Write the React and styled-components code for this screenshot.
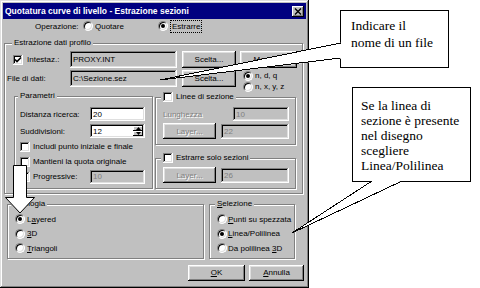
import React from "react";
import styled, { createGlobalStyle } from "styled-components";

const GlobalStyle = createGlobalStyle`
  html, body {
    margin: 0;
    padding: 0;
    background: #ffffff;
  }
  body {
    font-family: "Liberation Sans", Arial, sans-serif;
    overflow: hidden;
  }
`;

const Page = styled.div`
  position: relative;
  width: 480px;
  height: 288px;
  overflow: hidden;
`;

const Window = styled.div`
  width: 309px;
  height: 288px;
  box-sizing: border-box;
  padding: 3px;
  background: #c0c0c0;
  box-shadow: inset -1px -1px #000, inset 1px 1px #dfdfdf,
    inset -2px -2px #808080, inset 2px 2px #fff;
  display: flex;
  flex-direction: column;
  font-size: 8px;
  color: #000;
`;

const TitleBar = styled.div`
  height: 16px;
  flex: none;
  display: flex;
  align-items: center;
  justify-content: space-between;
  padding: 0 2px 0 2px;
  background: #000080;
  color: #fff;
  font-weight: 700;
  font-size: 8.5px;
`;

const CloseBtn = styled.div`
  width: 12px;
  height: 11px;
  display: flex;
  align-items: center;
  justify-content: center;
  background: #c0c0c0;
  box-shadow: inset -1px -1px #000, inset 1px 1px #fff, inset -2px -2px #808080;
`;

const Body = styled.div`
  flex: 1;
  display: flex;
  flex-direction: column;
  padding-left: 1px;
`;

const OpRow = styled.div`
  height: 14px;
  display: flex;
  align-items: center;
  padding-left: 31px;
`;

const OpLabel = styled.span`
  width: 48px;
`;

const Option = styled.div`
  display: flex;
  align-items: center;
  gap: ${(p) => (p.$gap != null ? p.$gap : 2)}px;
  width: ${(p) => (p.$w ? `${p.$w}px` : "auto")};
  height: ${(p) => (p.$h ? `${p.$h}px` : "auto")};
  white-space: nowrap;
`;

const Radio = styled.span`
  position: relative;
  flex: none;
  width: 10px;
  height: 10px;
  box-sizing: border-box;
  border-radius: 50%;
  background: #fff;
  border: 1px solid;
  border-color: #808080 #fff #fff #808080;
  box-shadow: inset 1px 1px 0 #000, inset -1px -1px 0 #dfdfdf;

  &::after {
    content: "";
    display: ${(p) => (p.$on ? "block" : "none")};
    position: absolute;
    left: 2px;
    top: 2px;
    width: 4px;
    height: 4px;
    border-radius: 50%;
    background: #000;
  }
`;

const Focus = styled.span`
  border: 1px dotted #000;
  padding: 0 1px;
  line-height: 11px;
`;

const CheckBox = styled.span`
  flex: none;
  width: 10px;
  height: 10px;
  box-sizing: border-box;
  display: inline-flex;
  align-items: center;
  justify-content: center;
  background: #fff;
  box-shadow: inset -1px -1px #fff, inset 1px 1px #808080,
    inset -2px -2px #dfdfdf, inset 2px 2px #000;
`;

const Frame = styled.fieldset`
  margin: ${(p) => p.$mt || 0}px 0 0 ${(p) => p.$ml || 0}px;
  padding: 0;
  min-width: 0;
  width: ${(p) => p.$w}px;
  box-sizing: border-box;
  border: 1px solid #808080;
  box-shadow: 1px 1px 0 #fff, inset 1px 1px 0 #fff;
`;

const Legend = styled.legend`
  margin-left: ${(p) => p.$ml}px;
  padding: 0 2px;
  height: 10px;
  line-height: 10px;
  background: #c0c0c0;
  white-space: nowrap;
`;

const LegendInner = styled.span`
  display: flex;
  align-items: center;
  gap: 3px;
`;

const FrameBody = styled.div`
  display: flex;
  flex-direction: column;
  padding: ${(p) => p.$pt || 0}px 0 ${(p) => p.$pb || 0}px ${(p) => p.$pl || 0}px;
`;

const Row = styled.div`
  display: flex;
  align-items: ${(p) => (p.$top ? "flex-start" : "center")};
  height: ${(p) => (p.$h ? `${p.$h}px` : "auto")};
  margin-top: ${(p) => p.$mt || 0}px;
  padding-left: ${(p) => p.$pl || 0}px;
`;

const Label = styled.span`
  flex: none;
  width: ${(p) => (p.$w ? `${p.$w}px` : "auto")};
  margin-left: ${(p) => p.$ml || 0}px;
  line-height: ${(p) => (p.$lh ? `${p.$lh}px` : "normal")};
  color: ${(p) => (p.$off ? "#808080" : "#000")};
  text-shadow: ${(p) => (p.$off ? "1px 1px 0 #fff" : "none")};
  white-space: nowrap;
`;

const Field = styled.div`
  flex: none;
  display: flex;
  align-items: center;
  width: ${(p) => p.$w}px;
  height: ${(p) => p.$h}px;
  margin-left: ${(p) => p.$ml || 0}px;
  box-sizing: border-box;
  padding: 2px 2px 2px 3px;
  background: ${(p) => (p.$gray || p.$off ? "#c0c0c0" : "#fff")};
  color: ${(p) => (p.$off ? "#808080" : "#000")};
  box-shadow: inset -1px -1px #fff, inset 1px 1px #808080,
    inset -2px -2px #dfdfdf, inset 2px 2px #000;
  white-space: nowrap;
`;

const FieldText = styled.span`
  flex: 1;
`;

const Spin = styled.div`
  display: flex;
  flex-direction: column;
  width: 10px;
  height: 100%;
`;

const SpinBtn = styled.div`
  flex: 1;
  display: flex;
  align-items: center;
  justify-content: center;
  background: #c0c0c0;
  box-shadow: inset -1px -1px #000, inset 1px 1px #fff;
`;

const Button = styled.div`
  flex: none;
  display: flex;
  align-items: center;
  justify-content: center;
  width: ${(p) => p.$w}px;
  height: ${(p) => p.$h}px;
  margin-left: ${(p) => p.$ml || 0}px;
  background: #c0c0c0;
  color: ${(p) => (p.$off ? "#808080" : "#000")};
  text-shadow: ${(p) => (p.$off ? "1px 1px 0 #fff" : "none")};
  box-shadow: inset -1px -1px #000, inset 1px 1px #fff,
    inset -2px -2px #808080, inset 2px 2px #dfdfdf;
  white-space: nowrap;
`;

const RadioStack = styled.div`
  display: flex;
  flex-direction: column;
  margin-left: ${(p) => p.$ml || 0}px;
`;

const Columns = styled.div`
  display: flex;
  align-items: flex-start;
  gap: 2px;
  margin-top: -1px;
  padding-left: 9px;
`;

const RightCol = styled.div`
  display: flex;
  flex-direction: column;
  gap: 8px;
  margin-top: 1px;
`;

const BottomRow = styled.div`
  display: flex;
  align-items: flex-start;
  margin-top: 5px;
`;

const ButtonRow = styled.div`
  display: flex;
  justify-content: flex-end;
  gap: 4px;
  margin-top: 6px;
  padding-right: 2px;
`;

const CalloutBox = styled.div`
  position: absolute;
  left: ${(p) => p.$x}px;
  top: ${(p) => p.$y}px;
  width: ${(p) => p.$w}px;
  height: ${(p) => p.$h}px;
  box-sizing: border-box;
  padding: ${(p) => p.$pt}px 0 0 ${(p) => p.$pl}px;
  background: #fff;
  border: 1px solid #000;
  font-family: "Liberation Serif", "Times New Roman", serif;
  font-size: 13.5px;
  line-height: ${(p) => p.$lh}px;
  color: #000;
`;

const Overlay = styled.svg`
  position: absolute;
  left: ${(p) => p.$x}px;
  top: ${(p) => p.$y}px;
  overflow: visible;
`;

const Check = ({ on }) => (
  <CheckBox>
    {on && (
      <svg width="8" height="8" viewBox="0 0 8 8">
        <path d="M1 3.5 L3 5.5 L7 1.5" fill="none" stroke="#000" strokeWidth="1.6" />
      </svg>
    )}
  </CheckBox>
);

const Pointer = ({ x, y, w, h, fill, line }) => (
  <Overlay $x={x} $y={y} width={w} height={h} viewBox={`0 0 ${w} ${h}`}>
    <polygon points={fill} fill="#fff" />
    <polyline points={line} fill="none" stroke="#000" strokeWidth="1" shapeRendering="crispEdges" />
  </Overlay>
);

export default function App() {
  return (
    <Page>
      <GlobalStyle />
      <Window>
        <TitleBar>
          <span>Quotatura curve di livello - Estrazione sezioni</span>
          <CloseBtn>
            <svg width="8" height="7" viewBox="0 0 8 7">
              <path d="M1 0.5 L7 6.5 M7 0.5 L1 6.5" stroke="#000" strokeWidth="1.4" />
            </svg>
          </CloseBtn>
        </TitleBar>
        <Body>
          <OpRow>
            <OpLabel>Operazione:</OpLabel>
            <Option $w={75}>
              <Radio />
              <span>Quotare</span>
            </Option>
            <Option>
              <Radio $on />
              <Focus>Estrarre</Focus>
            </Option>
          </OpRow>

          <Frame $w={299} $mt={5}>
            <Legend $ml={7}>Estrazione dati profilo</Legend>
            <FrameBody $pt={3} $pb={4}>
              <Row $h={17} $pl={8}>
                <Check on />
                <Label $w={43} $ml={4}>Intestaz.:</Label>
                <Field $w={107} $h={17} $gray>PROXY.INT</Field>
                <Button $w={54} $h={17} $ml={5}>Scelta...</Button>
                <Button $w={57} $h={17} $ml={4}>Modifica</Button>
              </Row>
              <Row $top $mt={2} $pl={2}>
                <Label $w={63} $lh={17}>File di dati:</Label>
                <Field $w={107} $h={17} $gray>C:\Sezione.sez</Field>
                <Button $w={54} $h={17} $ml={5}>Scelta...</Button>
                <RadioStack $ml={7}>
                  <Option $h={11}>
                    <Radio $on />
                    <span>n, d, q</span>
                  </Option>
                  <Option $h={11}>
                    <Radio />
                    <span>n, x, y, z</span>
                  </Option>
                </RadioStack>
              </Row>

              <Columns>
                <Frame $w={139}>
                  <Legend $ml={3}>Parametri</Legend>
                  <FrameBody $pt={6} $pb={4} $pl={5}>
                    <Row $h={14}>
                      <Label $w={70}>Distanza ricerca:</Label>
                      <Field $w={55} $h={14}>20</Field>
                    </Row>
                    <Row $h={14} $mt={3}>
                      <Label $w={70}>Suddivisioni:</Label>
                      <Field $w={55} $h={14}>
                        <FieldText>12</FieldText>
                        <Spin>
                          <SpinBtn>
                            <svg width="5" height="3" viewBox="0 0 5 3">
                              <path d="M0 3 L2.5 0 L5 3 Z" fill="#000" />
                            </svg>
                          </SpinBtn>
                          <SpinBtn>
                            <svg width="5" height="3" viewBox="0 0 5 3">
                              <path d="M0 0 L2.5 3 L5 0 Z" fill="#000" />
                            </svg>
                          </SpinBtn>
                        </Spin>
                      </Field>
                    </Row>
                    <Row $h={15} $mt={1}>
                      <Check />
                      <Label $ml={3}>Includi punto iniziale e finale</Label>
                    </Row>
                    <Row $h={15}>
                      <Check />
                      <Label $ml={3}>Mantieni la quota originale</Label>
                    </Row>
                    <Row $h={15}>
                      <Check />
                      <Label $w={57} $ml={3}>Progressive:</Label>
                      <Field $w={55} $h={14} $off>10</Field>
                    </Row>
                  </FrameBody>
                </Frame>

                <RightCol>
                  <Frame $w={141}>
                    <Legend $ml={5}>
                      <LegendInner>
                        <Check />
                        Linee di sezione
                      </LegendInner>
                    </Legend>
                    <FrameBody $pt={5} $pb={5} $pl={7}>
                      <Row $h={14}>
                        <Label $w={70} $off>Lunghezza</Label>
                        <Field $w={56} $h={14} $off>10</Field>
                      </Row>
                      <Row $h={16} $mt={2}>
                        <Button $w={53} $h={16} $off>Layer...</Button>
                        <Field $w={68} $h={15} $ml={5} $off>22</Field>
                      </Row>
                    </FrameBody>
                  </Frame>
                  <Frame $w={141}>
                    <Legend $ml={5}>
                      <LegendInner>
                        <Check />
                        Estrarre solo sezioni
                      </LegendInner>
                    </Legend>
                    <FrameBody $pt={4} $pb={5} $pl={7}>
                      <Row $h={16}>
                        <Button $w={53} $h={16} $off>Layer...</Button>
                        <Field $w={68} $h={15} $ml={5} $off>26</Field>
                      </Row>
                    </FrameBody>
                  </Frame>
                </RightCol>
              </Columns>
            </FrameBody>
          </Frame>

          <BottomRow>
            <Frame $w={197} $ml={3}>
              <Legend $ml={3}>Tipologia</Legend>
              <FrameBody $pt={3} $pb={2} $pl={7}>
                <Option $h={14.5}>
                  <Radio $on />
                  <span>L<u>a</u>yered</span>
                </Option>
                <Option $h={14.5}>
                  <Radio />
                  <span><u>3</u>D</span>
                </Option>
                <Option $h={14.5}>
                  <Radio />
                  <span><u>T</u>riangoli</span>
                </Option>
              </FrameBody>
            </Frame>
            <Frame $w={86} $ml={5}>
              <Legend $ml={5}><u>S</u>elezione</Legend>
              <FrameBody $pt={3} $pb={2} $pl={7}>
                <Option $h={14.5} $gap={1}>
                  <Radio />
                  <span><u>P</u>unti su spezzata</span>
                </Option>
                <Option $h={14.5} $gap={1}>
                  <Radio $on />
                  <span><u>L</u>inea/Polilinea</span>
                </Option>
                <Option $h={14.5} $gap={1}>
                  <Radio />
                  <span>Da polilinea <u>3</u>D</span>
                </Option>
              </FrameBody>
            </Frame>
          </BottomRow>

          <ButtonRow>
            <Button $w={57} $h={16}><span><u>O</u>K</span></Button>
            <Button $w={55} $h={16}><span><u>A</u>nnulla</span></Button>
          </ButtonRow>
        </Body>
      </Window>

      <CalloutBox $x={340} $y={10} $w={109} $h={58} $pt={6} $pl={10} $lh={17}>
        Indicare il
        <br />
        nome di un file
      </CalloutBox>
      <Pointer
        x={158}
        y={40}
        w={186}
        h={43}
        fill="2,40 184,2.5 184,18.5"
        line="182.5,3 2,40 182.5,18"
      />

      <CalloutBox $x={352} $y={87} $w={119} $h={95} $pt={10} $pl={8} $lh={15}>
        Se la linea di
        <br />
        sezione è presente
        <br />
        nel disegno
        <br />
        scegliere
        <br />
        Linea/Polilinea
      </CalloutBox>
      <Pointer
        x={290}
        y={179}
        w={115}
        h={56}
        fill="2,54 82,1.5 112,1.5"
        line="82,2 2,54 112,2"
      />

      <Overlay $x={4} $y={164} width={33} height={51} viewBox="0 0 33 51">
        <polygon
          points="9.5,1.5 22.5,1.5 22.5,33.5 30.5,33.5 16,49 1.5,33.5 9.5,33.5"
          fill="#fff"
          stroke="#000"
          strokeWidth="1"
        />
      </Overlay>
    </Page>
  );
}
